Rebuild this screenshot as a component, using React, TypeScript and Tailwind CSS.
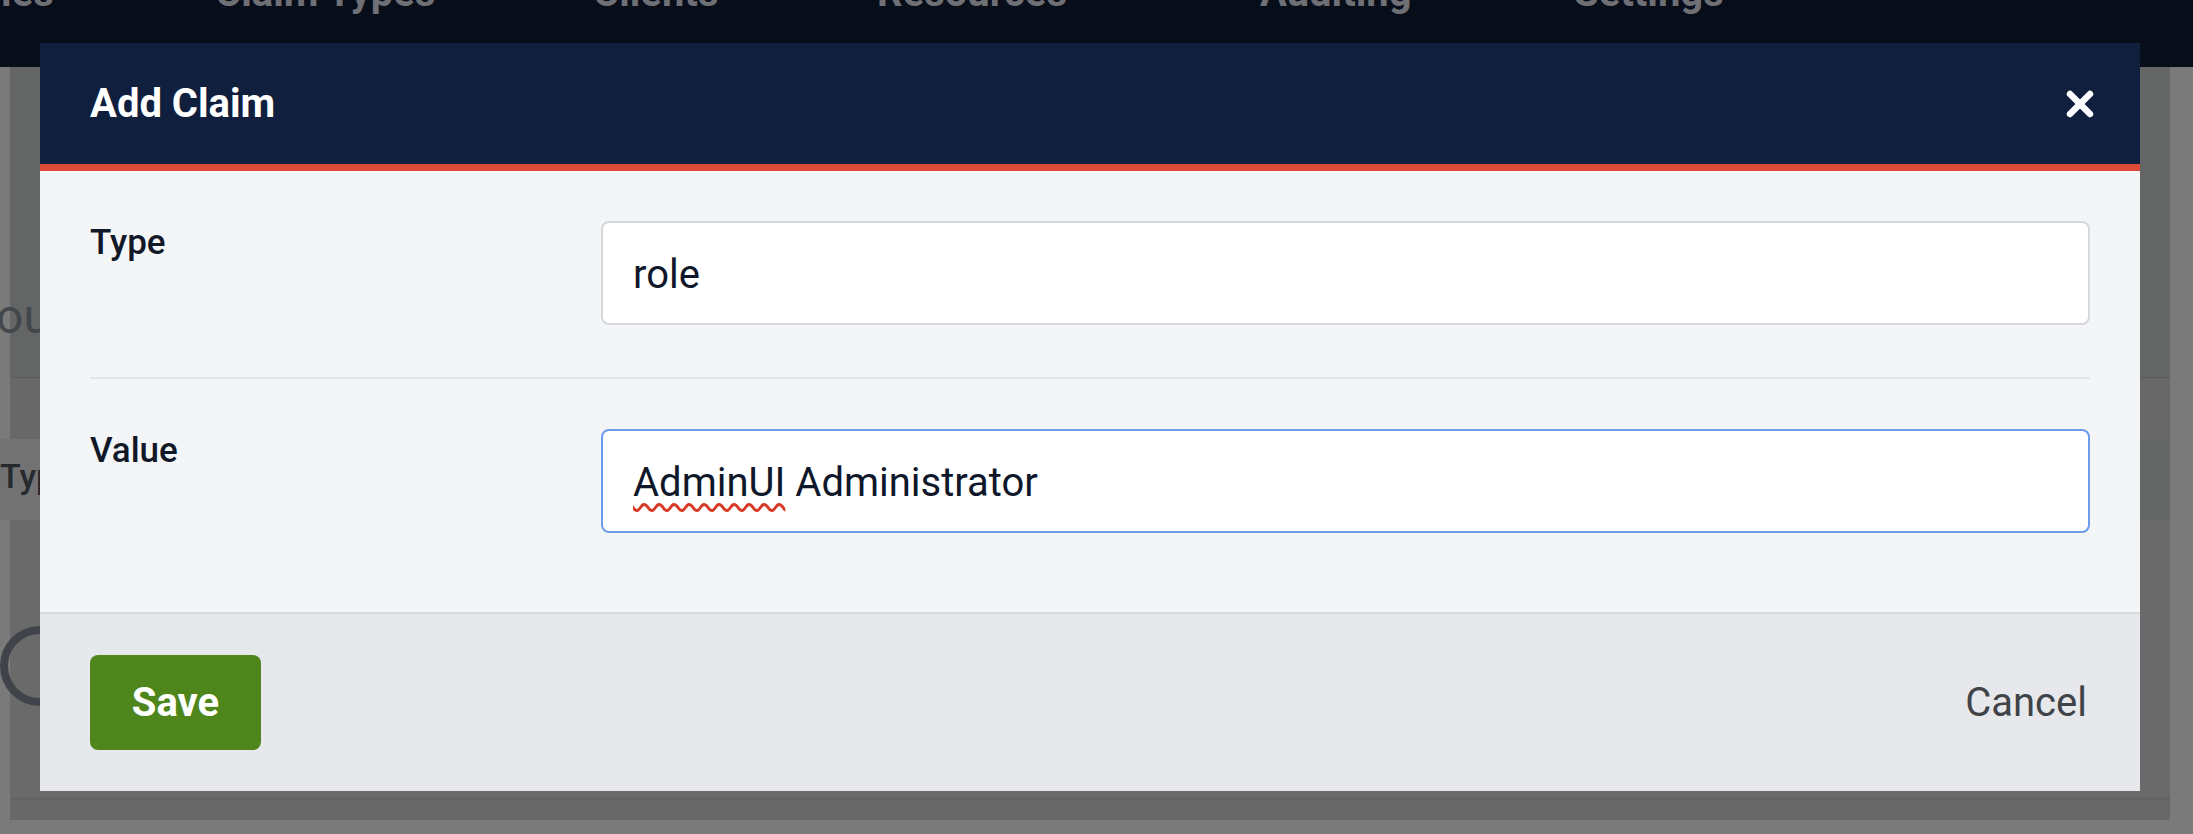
const navItems = [
  { label: 'Policies', width: 'w-[304px] -ml-[89px]' },
  { label: 'Claim Types', width: 'w-[378px]' },
  { label: 'Clients', width: 'w-[284px]' },
  { label: 'Resources', width: 'w-[383px]' },
  { label: 'Auditing', width: 'w-[314px]' },
  { label: 'Settings', width: 'w-[300px]' },
];

const CloseIcon = () => (
  <svg viewBox="0 0 28 28" className="h-[28px] w-[28px]" fill="none" stroke="white" strokeWidth="6.5" strokeLinecap="round">
    <path d="M4 4 24 24M24 4 4 24" />
  </svg>
);

// page underneath the dialog, already dimmed by the backdrop
const Backdrop = () => (
  <>
    <nav className="flex h-[67px] overflow-hidden bg-[#080d1a]">
      <div className="-mt-[27px] flex text-[40px] font-bold leading-none text-[#6e7075]">
        {navItems.map((item) => (
          <span key={item.label} className={`shrink-0 ${item.width}`}>
            {item.label}
          </span>
        ))}
      </div>
    </nav>

    <div className="ml-[10px] flex h-[753px] w-[2160px] flex-col bg-[#646665]">
      <div className="h-[226px]" />
      <div className="-ml-[14px] text-[48px] leading-none text-[#43464b]">ou</div>
      <div className="h-[36px]" />
      <div className="h-[1px] bg-[#5b5d5d]" />
      <div className="h-[61px] bg-[#686868]" />
      <div className="-ml-[10px] flex h-[81px] w-[2100px] items-center bg-[#727272] pb-[8px]">
        <span className="text-[34px] font-medium leading-none text-[#26292e]">Type</span>
      </div>
      <div className="flex-1 bg-[#6a6a6a]">
        <div className="-ml-[10px] mt-[106px] h-[80px] w-[80px] rounded-full border-[8px] border-[#40444a]" />
      </div>
      <div className="h-[2px] bg-[#636363]" />
      <div className="h-[20px] bg-[#686868]" />
    </div>
  </>
);

const Field = ({ label, focused, children }: { label: string; focused?: boolean; children: React.ReactNode }) => (
  <div className="grid grid-cols-[511px_1fr] items-start">
    <label className="pt-[4px] text-[35px] font-medium leading-none text-[#111827]">{label}</label>
    <div
      role="textbox"
      className={`flex h-[104px] items-center rounded-[8px] border-2 bg-white pl-[30px] pt-[4px] text-[40px] leading-none text-[#0f172a] ${
        focused ? 'border-[#6d9ceb]' : 'border-[#d5d8dd]'
      }`}
    >
      {children}
    </div>
  </div>
);

export default function App() {
  return (
    <div className="relative h-[834px] w-[2193px] overflow-hidden bg-[#7a7a7a] font-['Roboto',sans-serif]">
      <Backdrop />

      <div className="absolute left-[40px] top-[43px] w-[2100px]">
        <div className="flex h-[128px] items-center justify-between border-b-[7px] border-[#dc4a38] bg-[#0f1f3d] pl-[50px] pr-[46px]">
          <h2 className="text-[40px] font-bold leading-none text-white">Add Claim</h2>
          <button type="button" aria-label="Close" className="flex items-center">
            <CloseIcon />
          </button>
        </div>

        <div className="bg-[#f4f5f7] px-[50px] pb-[79px] pt-[50px]">
          <Field label="Type">role</Field>
          <div className="mb-[50px] mt-[52px] h-[2px] bg-[#e3e5e9]" />
          <Field label="Value" focused>
            <span>
              <span className="underline decoration-[#d93a26] decoration-wavy decoration-[3px] underline-offset-[7px]">AdminUI</span>{' '}
              Administrator
            </span>
          </Field>
        </div>

        <div className="flex h-[179px] items-center justify-between border-t-2 border-[#d6d8dd] bg-[#e7e8ec] pl-[50px] pr-[53px]">
          <button type="button" className="h-[95px] w-[171px] rounded-[8px] bg-[#4f861c] text-[40px] font-bold leading-none text-white">
            Save
          </button>
          <button type="button" className="text-[40px] font-normal leading-none text-[#404348]">
            Cancel
          </button>
        </div>
      </div>
    </div>
  );
}
